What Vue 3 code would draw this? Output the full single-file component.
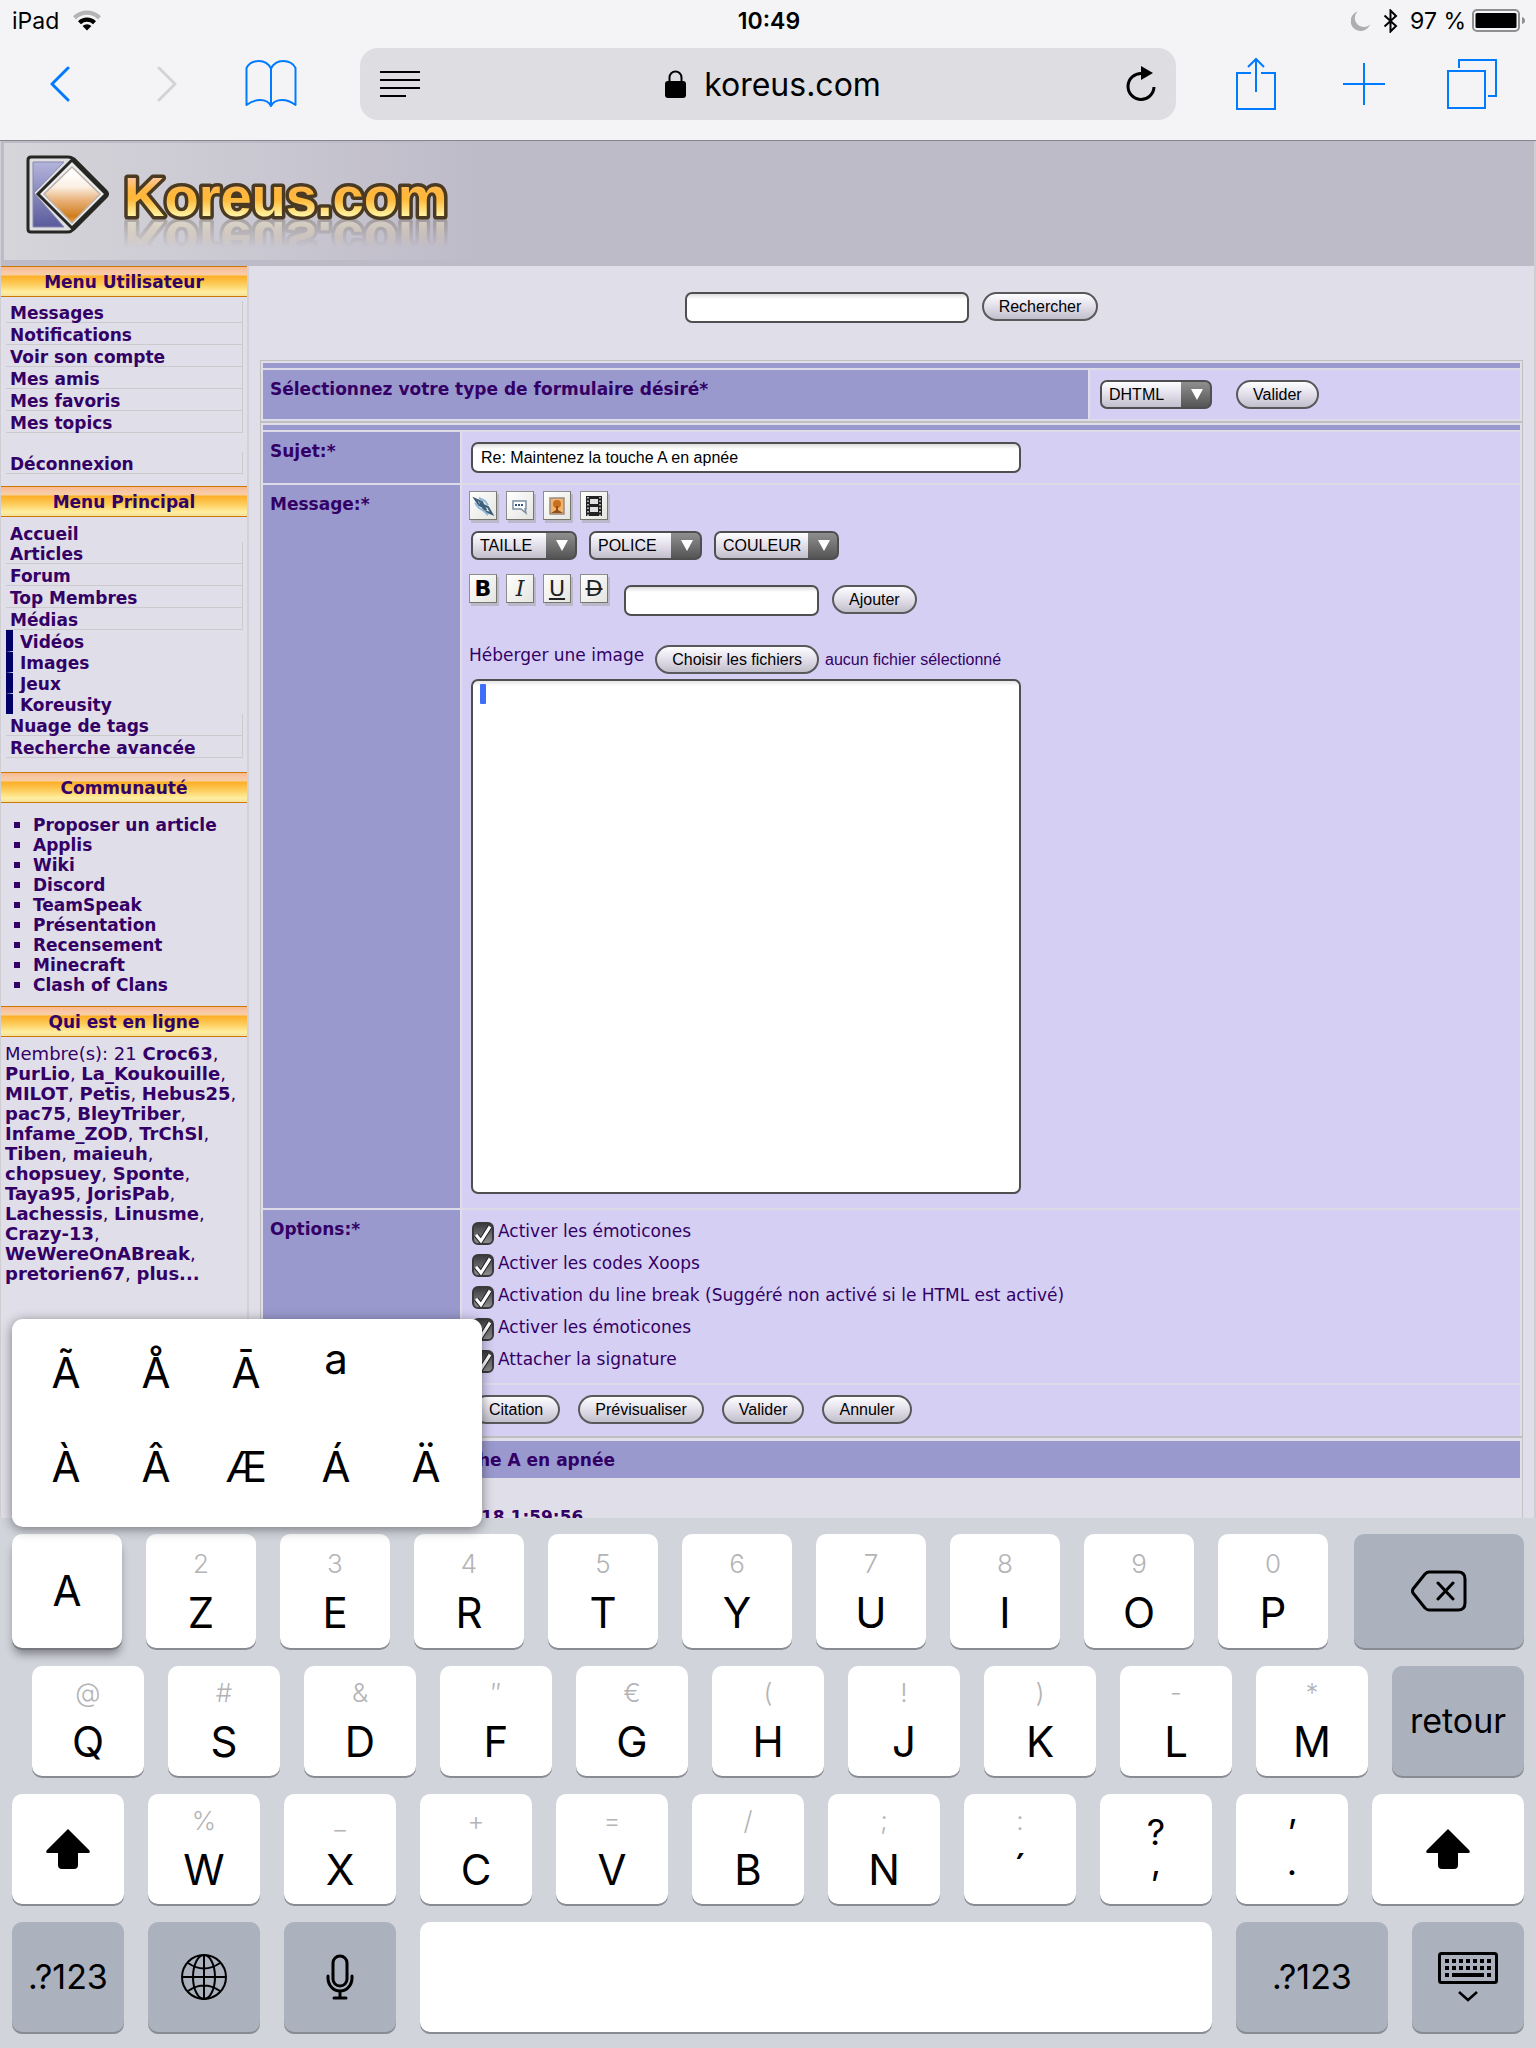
<script setup>
import { ref } from 'vue'

const userMenu = ['Messages', 'Notifications', 'Voir son compte', 'Mes amis', 'Mes favoris', 'Mes topics']
const mainMenu = [
  { label: 'Accueil', kind: 'plain' },
  { label: 'Articles', kind: 'item' },
  { label: 'Forum', kind: 'item' },
  { label: 'Top Membres', kind: 'item' },
  { label: 'Médias', kind: 'item' },
  { label: 'Vidéos', kind: 'sub' },
  { label: 'Images', kind: 'sub' },
  { label: 'Jeux', kind: 'sub' },
  { label: 'Koreusity', kind: 'sub' },
  { label: 'Nuage de tags', kind: 'item' },
  { label: 'Recherche avancée', kind: 'item' },
]
const community = ['Proposer un article', 'Applis', 'Wiki', 'Discord', 'TeamSpeak', 'Présentation', 'Recensement', 'Minecraft', 'Clash of Clans']
const members = ['Croc63', 'PurLio', 'La_Koukouille', 'MILOT', 'Petis', 'Hebus25', 'pac75', 'BleyTriber', 'Infame_ZOD', 'TrChSl', 'Tiben', 'maieuh', 'chopsuey', 'Sponte', 'Taya95', 'JorisPab', 'Lachessis', 'Linusme', 'Crazy-13', 'WeWereOnABreak', 'pretorien67']

const subject = ref('Re: Maintenez la touche A en apnée')
const options = ref([
  { label: 'Activer les émoticones', on: true },
  { label: 'Activer les codes Xoops', on: true },
  { label: 'Activation du line break (Suggéré non activé si le HTML est activé)', on: true },
  { label: 'Activer les émoticones', on: true },
  { label: 'Attacher la signature', on: true },
])
const selects = [
  { label: 'TAILLE', cls: 'size' },
  { label: 'POLICE', cls: 'font' },
  { label: 'COULEUR', cls: 'color' },
]
const actions = ['Citation', 'Prévisualiser', 'Valider', 'Annuler']

const accents = [
  ['Ã', 'Å', 'Ā', 'a'],
  ['À', 'Â', 'Æ', 'Á', 'Ä'],
]
const row1 = [['2', 'Z'], ['3', 'E'], ['4', 'R'], ['5', 'T'], ['6', 'Y'], ['7', 'U'], ['8', 'I'], ['9', 'O'], ['0', 'P']]
const row2 = [['@', 'Q'], ['#', 'S'], ['&', 'D'], ['″', 'F'], ['€', 'G'], ['(', 'H'], ['!', 'J'], [')', 'K'], ['-', 'L'], ['*', 'M']]
const row3 = [['%', 'W'], ['_', 'X'], ['+', 'C'], ['=', 'V'], ['/', 'B'], [';', 'N'], [':', '´']]

const fileInput = ref(null)
</script>

<template>
  <div class="screen">
    <header class="chrome">
      <div class="status">
        <div class="status-left">
          <span>iPad</span>
          <svg width="28" height="21" viewBox="0 0 28 21">
            <path d="M0 6.2A20 20 0 0 1 28 6.2L25 9.4A15.6 15.6 0 0 0 3 9.4Z" fill="#b4b4b6" />
            <path d="M5 11.2A12.8 12.8 0 0 1 23 11.2L20 14.2A8.6 8.6 0 0 0 8 14.2Z" />
            <path d="M9.6 16A6.2 6.2 0 0 1 18.400 16L14 20.600Z" />
          </svg>
        </div>
        <span class="time">10:49</span>
        <div class="status-right">
          <svg width="20" height="20" viewBox="0 0 20 20"><path d="M6.500 0.500A10 10 0 1 0 19 13.500A9 9 0 0 1 6.500 0.500Z" fill="#aeaeb1" /></svg>
          <svg width="15" height="24" viewBox="0 0 15 24" fill="none" stroke="#000" stroke-width="2"><path d="M1.500 6.500L13 17L7.500 22.500V1.500L13 7L1.500 17.500" /></svg>
          <span>97 %</span>
          <svg width="54" height="24" viewBox="0 0 54 24">
            <rect x="1" y="1" width="46" height="21" rx="4" fill="none" stroke="#8f8f92" stroke-width="2" />
            <rect x="3.500" y="4" width="41" height="15" rx="1.500" />
            <path d="M50 8Q53 9 53 11.500T50 15Z" fill="#8f8f92" />
          </svg>
        </div>
      </div>
      <nav class="toolbar">
        <button class="tool" aria-label="Retour"><svg width="20" height="36" viewBox="0 0 20 36" fill="none" stroke="#007aff" stroke-width="3" stroke-linecap="round" stroke-linejoin="round"><path d="M18 2L2 18L18 34" /></svg></button>
        <button class="tool" aria-label="Avancer"><svg width="20" height="36" viewBox="0 0 20 36" fill="none" stroke="#d4d4d8" stroke-width="3" stroke-linecap="round" stroke-linejoin="round"><path d="M2 2L18 18L2 34" /></svg></button>
        <button class="tool book" aria-label="Signets"><svg width="52" height="50" viewBox="0 0 52 50" fill="none" stroke="#007aff" stroke-width="2" stroke-linejoin="round"><path d="M26 47V9.500Q22 2 14 2Q5 2 1.500 9V46Q8 41 15 41Q23 41 26 47Q29 41 37 41Q44 41 50.500 46V9Q47 2 38 2Q30 2 26 9.500" /></svg></button>
        <div class="address">
          <svg width="40" height="28" viewBox="0 0 40 28" stroke="#000" stroke-width="2"><path d="M0 2H40M0 10H40M0 18H40M0 26H26" /></svg>
          <a class="host" href="#">
            <svg width="21" height="28" viewBox="0 0 21 28"><path d="M4.500 12V7.500A6 6 0 0 1 16.500 7.500V12" fill="none" stroke="#000" stroke-width="2" /><rect y="11" width="21" height="17" rx="3" /></svg>
            <span>koreus.com</span>
          </a>
          <svg width="30" height="36" viewBox="0 0 30 36"><path d="M28 21A13 13 0 1 1 16 7.500" fill="none" stroke="#000" stroke-width="3" /><path d="M15 0L27 7L15 14Z" /></svg>
        </div>
        <button class="tool" aria-label="Partager"><svg class="share" width="40" height="54" viewBox="0 0 40 54" fill="none" stroke="#007aff" stroke-width="2"><path d="M15 16H1V52H39V16H25M20 35V2M12 10L20 2L28 10" /></svg></button>
        <button class="tool" aria-label="Nouvel onglet"><svg width="42" height="42" viewBox="0 0 42 42" stroke="#007aff" stroke-width="2"><path d="M21 0V42M0 21H42" /></svg></button>
        <button class="tool" aria-label="Onglets"><svg width="50" height="50" viewBox="0 0 50 50" fill="none" stroke="#007aff" stroke-width="2"><path d="M1 12H38V49H1ZM12 9V1H49V37H41" /></svg></button>
      </nav>
    </header>

    <div class="web">
      <div class="banner">
        <a class="logo" href="#" aria-label="Koreus.com">
          <svg class="mark" width="88" height="82" viewBox="0 0 88 82">
            <defs>
              <linearGradient id="panel" x1="0" y1="0" x2="0" y2="1"><stop offset="0" stop-color="#b3b5dc" /><stop offset="1" stop-color="#5a5a9c" /></linearGradient>
              <linearGradient id="gem" x1="0" y1="0" x2="0" y2="1"><stop offset="0.100" stop-color="#fff" /><stop offset="0.350" stop-color="#fbf0e4" /><stop offset="0.600" stop-color="#e8b078" /><stop offset="0.880" stop-color="#cf7d1c" /><stop offset="1" stop-color="#f0a040" /></linearGradient>
            </defs>
            <path d="M6 4H43Q46 4 49 6L81 38Q84 41 81 44L49 76Q46 79 43 79H6Q3 79 3 76V7Q3 4 6 4Z" fill="#dedee2" stroke="#262622" stroke-width="3" />
            <path d="M8 9H39L9 40L39 74H8Z" fill="url(#panel)" stroke="#8788ad" stroke-width="1" />
            <path d="M47 7L81 41L47 75L13 41Z" fill="#ececef" stroke="#262622" stroke-width="3" />
            <path d="M47 14L75 41L47 70L19 41Z" fill="url(#gem)" stroke="#bfb2a8" stroke-width="1.500" />
          </svg>
          <svg class="wordmark" width="345" height="68" viewBox="0 0 345 68">
            <defs><linearGradient id="gold" x1="0" y1="0" x2="0" y2="1"><stop offset="0.180" stop-color="#ffc9a6" /><stop offset="0.400" stop-color="#ffb640" /><stop offset="0.550" stop-color="#ffb93a" /><stop offset="0.800" stop-color="#fff2a0" /></linearGradient></defs>
            <text x="11" y="54" class="word">Koreus.com</text>
          </svg>
        </a>
      </div>

      <div class="columns">
        <aside class="sidebar">
          <h2>Menu Utilisateur</h2>
          <nav class="menu user">
            <a v-for="m in userMenu" :key="m" href="#" class="item">{{ m }}</a>
            <a href="#" class="item logout">Déconnexion</a>
          </nav>
          <h2>Menu Principal</h2>
          <nav class="menu main-menu">
            <a v-for="m in mainMenu" :key="m.label" href="#" :class="m.kind">{{ m.label }}</a>
          </nav>
          <h2>Communauté</h2>
          <ul class="links">
            <li v-for="c in community" :key="c"><a href="#">{{ c }}</a></li>
          </ul>
          <h2>Qui est en ligne</h2>
          <p class="online">Membre(s): 21 <template v-for="m in members" :key="m"><a href="#">{{ m }}</a>, </template><a href="#">plus...</a></p>
        </aside>

        <main class="content">
          <form class="search" @submit.prevent>
            <input type="text" class="field" aria-label="Recherche">
            <button class="pill">Rechercher</button>
          </form>

          <form class="frame" @submit.prevent>
            <div class="strip"></div>
            <div class="row type-row">
              <label class="head" for="form-type">Sélectionnez votre type de formulaire désiré*</label>
              <div class="cell type-cell">
                <span class="select dhtml"><select id="form-type"><option>DHTML</option></select></span>
                <button class="pill">Valider</button>
              </div>
            </div>
          </form>

          <form class="frame second" @submit.prevent>
            <div class="strip"></div>
            <div class="row">
              <label class="head" for="subject">Sujet:*</label>
              <div class="cell subject-cell"><input id="subject" v-model="subject" type="text" class="field"></div>
            </div>
            <div class="row">
              <label class="head" for="message">Message:*</label>
              <div class="cell editor">
                <div class="icons">
                  <button class="icon" aria-label="Lien"><svg width="24" height="24" viewBox="0 0 24 24" fill="none"><path d="M4 5L11 8L14 14L8 11ZM10 10L17 13L21 20L14 17Z" stroke="#3d5f7d" stroke-width="2" /><path d="M4 9L8 14L13 17L17 21M8 4L14 7L17 11" stroke="#8fb5d6" stroke-width="2" /></svg></button>
                  <button class="icon" aria-label="Citation"><svg width="24" height="24" viewBox="0 0 24 24" fill="#fff" stroke="#7d8ea0" stroke-width="1.500"><path d="M5 7H18V15H17L18 19L13 15H5Z" /><path d="M7 11H16" stroke="#33557d" stroke-width="2" stroke-dasharray="2 1" /></svg></button>
                  <button class="icon" aria-label="Image"><svg width="24" height="24" viewBox="0 0 24 24"><rect x="5" y="4" width="14" height="16" fill="#f4b36c" stroke="#998c80" stroke-width="1.500" /><circle cx="12" cy="10" r="4" fill="#c8701f" /><path d="M11 12H13V16L18 19H6L11 16Z" fill="#8f4d18" /></svg></button>
                  <button class="icon" aria-label="Vidéo"><svg width="24" height="24" viewBox="0 0 24 24"><rect x="4" y="2" width="16" height="20" fill="#222" /><path d="M8 5H16V10H8ZM8 13H16V18H8Z" fill="#e2e2e2" /><path d="M6 3V22M18 3V22" stroke="#ddd" stroke-width="1.500" stroke-dasharray="1.500 2" /></svg></button>
                </div>
                <div class="pickers">
                  <span v-for="s in selects" :key="s.label" class="select" :class="s.cls"><select :aria-label="s.label"><option>{{ s.label }}</option></select></span>
                </div>
                <div class="format">
                  <div class="icons">
                    <button class="icon b">B</button>
                    <button class="icon i">I</button>
                    <button class="icon u">U</button>
                    <button class="icon s">D</button>
                  </div>
                  <input type="text" class="field add" aria-label="Texte à ajouter">
                  <button class="pill">Ajouter</button>
                </div>
                <div class="upload">
                  <label for="upload">Héberger une image</label>
                  <input id="upload" ref="fileInput" type="file" multiple hidden>
                  <button type="button" class="pill" @click="fileInput.click()">Choisir les fichiers</button>
                  <span class="none">aucun fichier sélectionné</span>
                </div>
                <div class="area">
                  <textarea id="message"></textarea>
                  <i class="caret"></i>
                </div>
              </div>
            </div>
            <div class="row">
              <div class="head">Options:*</div>
              <div class="cell options">
                <label v-for="(o, i) in options" :key="i"><input v-model="o.on" type="checkbox"><span>{{ o.label }}</span></label>
              </div>
            </div>
            <div class="row">
              <div class="head"></div>
              <div class="cell actions"><button v-for="a in actions" :key="a" class="pill">{{ a }}</button></div>
            </div>
          </form>

          <section class="topic">
            <h3>Re: Maintenez la touche A en apnée</h3>
            <p>18 1:59:56</p>
          </section>
        </main>
      </div>
    </div>

    <div class="keyboard">
      <div class="keys tall">
        <div class="key-slot">
          <button class="key pressed">A</button>
          <div class="popup">
            <div v-for="(line, i) in accents" :key="i" class="accents">
              <button v-for="c in line" :key="c" :class="{ raised: c === 'a' }">{{ c }}</button>
            </div>
          </div>
        </div>
        <button v-for="k in row1" :key="k[1]" class="key"><small>{{ k[0] }}</small><span>{{ k[1] }}</span></button>
        <button class="key dark delete" aria-label="Effacer"><svg width="56" height="42" viewBox="0 0 56 42" fill="none" stroke="#000" stroke-width="3" stroke-linecap="round" stroke-linejoin="round"><path d="M18 2H47Q54 2 54 9V33Q54 40 47 40H18Q16 40 14 38L2 23Q1 21 2 19L14 4Q16 2 18 2ZM27 13L42 29M42 13L27 29" /></svg></button>
      </div>
      <div class="keys indent">
        <button v-for="k in row2" :key="k[1]" class="key"><small>{{ k[0] }}</small><span>{{ k[1] }}</span></button>
        <button class="key dark return">retour</button>
      </div>
      <div class="keys">
        <button class="key center" aria-label="Majuscule"><svg width="44" height="40" viewBox="0 0 44 40"><path d="M22 0L43 21Q45 24 42 24H32V36Q32 40 28 40H16Q12 40 12 36V24H2Q-1 24 1 21Z" /></svg></button>
        <button v-for="k in row3" :key="k[1]" class="key"><small>{{ k[0] }}</small><span>{{ k[1] }}</span></button>
        <button class="key dual"><span>?</span><span>,</span></button>
        <button class="key dual"><span>’</span><span>.</span></button>
        <button class="key center shift" aria-label="Majuscule"><svg width="44" height="40" viewBox="0 0 44 40"><path d="M22 0L43 21Q45 24 42 24H32V36Q32 40 28 40H16Q12 40 12 36V24H2Q-1 24 1 21Z" /></svg></button>
      </div>
      <div class="keys">
        <button class="key dark">.?123</button>
        <button class="key dark" aria-label="Langue"><svg width="46" height="46" viewBox="0 0 46 46" fill="none" stroke="#000" stroke-width="2"><circle cx="23" cy="23" r="22" /><ellipse cx="23" cy="23" rx="11" ry="22" /><path d="M23 1V45M1 23H45M7 9Q23 20 39 9M7 37Q23 26 39 37" /></svg></button>
        <button class="key dark" aria-label="Dictée"><svg width="28" height="46" viewBox="0 0 28 46" fill="none" stroke="#000" stroke-width="3" stroke-linecap="round"><rect x="7" y="2" width="14" height="30" rx="7" /><path d="M2 22V24A12 13 0 0 0 26 24V22M14 37V43M8 44H20" /></svg></button>
        <button class="key space" aria-label="Espace"></button>
        <button class="key dark shift">.?123</button>
        <button class="key dark" aria-label="Masquer le clavier"><svg width="60" height="50" viewBox="0 0 60 50" fill="none" stroke="#000"><rect x="1.500" y="1.500" width="57" height="29" rx="2" stroke-width="3" /><path d="M7 9H54M7 16H54" stroke-width="4" stroke-dasharray="4 3" /><path d="M7 23H11M14 23H46M49 23H53" stroke-width="4" /><path d="M21 40L30 48L39 40" stroke-width="2.500" /></svg></button>
      </div>
    </div>
  </div>
</template>

<style>
body { margin: 0; }
</style>

<style scoped>
* { box-sizing: border-box; }
button, input, select, textarea { font-family: inherit; margin: 0; color: #000; }
button { border: 0; padding: 0; background: none; }
a { color: inherit; text-decoration: none; }
svg { display: block; flex: none; }

.screen {
  display: flex;
  flex-direction: column;
  height: 100vh;
  overflow: hidden;
  font-family: Inter, "Noto Sans", sans-serif;
  color: #000;
}

/* browser chrome */
.chrome { flex: none; background: #f4f4f6; border-bottom: 1px solid #86858e; }
.status {
  display: grid;
  grid-template-columns: 1fr auto 1fr;
  align-items: center;
  height: 41px;
  padding: 0 10px 0 12px;
  font-size: 23px;
}
.status-left, .status-right { display: flex; align-items: center; gap: 14px; }
.status-right { justify-content: flex-end; gap: 6px; }
.status-right svg:nth-child(1), .status-right svg:nth-child(2) { margin-right: 6px; }
.time { font-weight: 600; }
.toolbar { display: flex; align-items: center; height: 99px; padding: 7px 10px 20px 6px; }
.tool { width: 108px; height: 72px; display: flex; align-items: center; justify-content: center; }
.tool:nth-child(-n+2) { width: 107px; }
.book { width: 102px; margin-right: 38px; }
.address {
  flex: 1;
  display: flex;
  align-items: center;
  justify-content: space-between;
  height: 72px;
  margin-right: 26px;
  padding: 0 20px;
  border-radius: 18px;
  background: #dedde2;
}
.host { display: flex; align-items: center; gap: 18px; font-size: 32px; }

/* site */
.web {
  flex: 1;
  min-height: 0;
  overflow: hidden;
  background: #e0dee8;
  color: #330066;
  font-family: Verdana, "DejaVu Sans", sans-serif;
  font-size: 17px;
  border: solid #cfcfd3;
  border-width: 0 2px 0 1px;
}
.banner { height: 125px; padding: 2px 0 6px 3px; background: #bebbc9; }
.logo {
  display: flex;
  height: 117px;
  width: 480px;
  padding: 10px 0 0 21px;
  background: linear-gradient(90deg, #d6d5da, #bebbc9);
}
.wordmark { margin-top: 9px; -webkit-box-reflect: below -22px linear-gradient(transparent 42%, rgba(0, 0, 0, 0.28) 85%); }
.word {
  font: bold 56px "Liberation Sans", Arial, sans-serif;
  fill: url(#gold);
  stroke: #4b3a22;
  stroke-width: 7px;
  stroke-linejoin: round;
  paint-order: stroke;
}
.columns { display: flex; }
.sidebar { flex: none; width: 248px; border-right: 2px solid #d2d1d6; font-weight: bold; }
h2 {
  margin: 0;
  height: 31px;
  font-size: 17px;
  line-height: 29px;
  text-align: center;
  padding-top: 1px;
  border: solid #cd7804;
  border-width: 1px 0;
  background: linear-gradient(#f8b98c 0, #f8c8a8 5px, #f8cfa0 8px, #fdae26 9px, #fdd061 18px, #feeea0 25px, #f6e49c 28px);
}
.menu { display: flex; flex-direction: column; padding-left: 5px; padding-right: 4px; }
.user { padding-top: 4px; padding-bottom: 12px; }
.main-menu { padding-top: 5px; padding-bottom: 14px; }
.menu a { height: 22px; padding: 4px 0 0 4px; line-height: 17px; }
.menu .item { border: solid #cbcacd; border-width: 0 1px 1px 0; }
.menu .logout { margin-top: 19px; }
.menu .plain { height: 20px; }
.menu .sub { height: 21px; border-left: 7px solid #000066; padding-left: 7px; }
.menu .sub + .sub { border-top: 1px solid #e0dee8; padding-top: 3px; }
.links { list-style: none; margin: 0; padding: 12px 0 11px 13px; }
.links li { display: flex; align-items: center; line-height: 20px; gap: 13px; }
.links li::before { content: ""; width: 6px; height: 6px; background: #330066; }
.online { margin: 0; padding: 7px 2px 0 4px; font-size: 18px; line-height: 20px; font-weight: normal; }
.online a { font-weight: bold; }

.content { flex: 1; min-width: 0; padding: 26px 11px 0 11px; }
.search { display: flex; justify-content: center; gap: 13px; padding-bottom: 37px; }
.search .field { width: 284px; }
.field {
  height: 31px;
  padding: 0 8px;
  border: 2px solid #4f4f52;
  border-radius: 7px;
  background: linear-gradient(#dcdcdc, #fff 5px);
  font: 16px "Liberation Sans", Arial, sans-serif;
}
.pill {
  height: 29px;
  padding: 0 15px;
  border: 2px solid #59595c;
  border-radius: 15px;
  background: linear-gradient(#fdfdff, #e2dfea 50%, #c2bfcc);
  font: 16px "Liberation Sans", Arial, sans-serif;
  white-space: nowrap;
}
.select { position: relative; display: block; height: 29px; }
.select select {
  appearance: none;
  width: 100%;
  height: 100%;
  padding: 0 7px;
  border: 2px solid #4f4f52;
  border-radius: 7px;
  background:
    linear-gradient(#8f8f8f, #555) right / 29px 100% no-repeat,
    linear-gradient(#fdfdff, #e2dfea 50%, #c2bfcc);
  font: 16px "Liberation Sans", Arial, sans-serif;
}
.select::after {
  content: "";
  position: absolute;
  top: 9px;
  right: 9px;
  border: solid transparent;
  border-width: 11px 6px 0;
  border-top-color: #fff;
  pointer-events: none;
}
.dhtml { width: 112px; }
.size { width: 106px; }
.font { width: 113px; }
.color { width: 125px; }

.frame { border: solid #bfbfc0; border-width: 1px 1px 2px; padding: 2px 2px 0; }
.second { border-top: 0; }
.strip { height: 5px; background: #9a99ce; }
.row { display: flex; border-top: 2px solid #dddbe8; }
.head { width: 197px; padding: 9px 7px; background: #9a99ce; font-weight: bold; }
.cell { flex: 1; min-width: 0; background: #d5d0f3; margin-left: 2px; }
.type-row { border-bottom: 2px solid #dddbe8; }
.type-row .head { flex: 1; }
.type-cell { display: flex; flex: none; width: 430px; gap: 24px; padding: 10px; height: 49px; }
.subject-cell { padding: 10px 9px; }
.subject-cell .field { display: block; width: 550px; }
.editor { padding: 6px 9px 14px 7px; }
.icons { display: flex; gap: 9px; }
.icon {
  width: 28px;
  height: 29px;
  display: flex;
  align-items: center;
  justify-content: center;
  border: 1px solid #8a8a88;
  border-color: #8e8e8c #77776f #77776f #8e8e8c;
  background: linear-gradient(135deg, #fff, #e4e4e0);
  box-shadow: 2px 3px 0 #bbb8c9;
  font: 22px "DejaVu Sans", sans-serif;
  color: #222;
}
.icon.b { font-weight: bold; color: #000; }
.icon.i { font-family: "DejaVu Serif", serif; font-style: italic; }
.icon.u { text-decoration: underline; }
.icon.s { text-decoration: line-through; }
.pickers { display: flex; gap: 12px; padding: 11px 0 14px 2px; }
.format { display: flex; }
.format .add { width: 195px; margin: 11px 13px 0 16px; }
.format .pill { margin-top: 11px; }
.upload { display: flex; align-items: center; padding-top: 29px; height: 58px; }
.upload label { padding-bottom: 10px; margin-right: 11px; }
.upload .none { margin-left: 6px; font: 16px "Liberation Sans", Arial, sans-serif; }
.area { position: relative; width: 550px; margin: 5px 0 0 2px; }
textarea {
  display: block;
  width: 100%;
  height: 515px;
  border: 2px solid #4f4f52;
  border-radius: 7px;
  background: linear-gradient(#e6e6e6, #fff 5px);
  resize: none;
}
.caret { position: absolute; left: 9px; top: 5px; width: 6px; height: 20px; border-radius: 1px; background: #3f6ff6; }
.options { display: flex; flex-direction: column; padding: 7px 10px 6px; }
.options label { display: flex; align-items: center; height: 32px; gap: 4px; }
.options span { padding-bottom: 4px; }
.options input {
  appearance: none;
  width: 22px;
  height: 23px;
  border: 2px solid #3a3a3c;
  border-radius: 6px;
  background: linear-gradient(#3c3c40, #8e8e90);
}
.options input:checked {
  background: url("data:image/svg+xml,%3Csvg xmlns='http://www.w3.org/2000/svg' viewBox='0 0 20 20'%3E%3Cpath d='M3 11L8 17L17 3' fill='none' stroke='%23222' stroke-width='5'/%3E%3Cpath d='M3 11L8 17L17 3' fill='none' stroke='%23fff' stroke-width='3'/%3E%3C/svg%3E") center / 20px 20px no-repeat, linear-gradient(#3c3c40, #8e8e90);
}
.actions { display: flex; gap: 18px; padding: 10px 10px 12px; }
.topic { border: solid #c4c3c8; border-width: 0 1px; padding: 3px 2px 0; }
.topic h3 { margin: 0; height: 37px; padding: 0 7px; background: #9a99ce; font-size: 17px; line-height: 38px; }
.topic p { margin: 29px 0 0 218px; font-weight: bold; line-height: 20px; }

/* on-screen keyboard */
.keyboard {
  flex: none;
  display: flex;
  flex-direction: column;
  gap: 18px;
  padding: 16px 12px;
  background: #d1d4db;
}
.keys { display: flex; gap: 24px; }
.indent { padding-left: 20px; }
.key, .key-slot { flex: 0 0 112px; }
.key {
  display: flex;
  flex-direction: column;
  align-items: center;
  height: 110px;
  padding-top: 12px;
  border-radius: 10px;
  background: #fff;
  box-shadow: 0 2px 0 #888b90;
  font-size: 42px;
  line-height: 52px;
}
.key small { margin-bottom: 8px; font-size: 26px; line-height: 30px; font-weight: 300; color: #b4b4b6; }
.tall .key { flex-basis: 110px; height: 114px; padding-top: 15px; }
.tall .key-slot { position: relative; flex-basis: 110px; }
.key.dark, .key.center, .tall .pressed, .tall .delete { justify-content: center; padding: 0; }
.key.dark { background: #abb1bd; font-size: 34px; }
.tall .pressed { width: 100%; box-shadow: 0 2px 0 #77797e, 0 8px 10px -2px rgba(0, 0, 0, 0.4); }
.tall .delete { flex: 1; margin-left: 2px; }
.return, .key.space { flex: 1; }
.shift { flex: 0 0 152px; }
.key.dual { padding-top: 23px; font-size: 36px; line-height: 30px; }
.popup {
  position: absolute;
  left: 0;
  bottom: 121px;
  z-index: 2;
  width: 470px;
  height: 208px;
  padding: 18px 9px 0;
  border-radius: 11px;
  background: #fff;
  box-shadow: 0 2px 12px rgba(0, 0, 0, 0.45);
}
.accents { display: flex; height: 94px; }
.accents button { width: 90px; font-size: 42px; line-height: 72px; height: 72px; }
.accents .raised { line-height: 44px; height: 44px; }
</style>
